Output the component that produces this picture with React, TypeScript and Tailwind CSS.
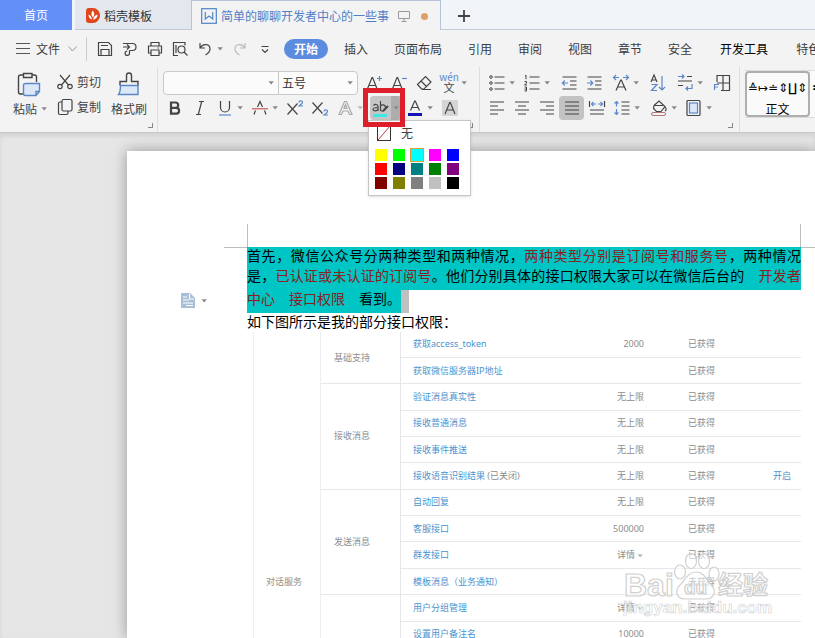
import type { ReactNode } from "react";

const INK = "#444";
const BLUE = "#5b87c9";

function Icon({ children, size = 20 }: { children: ReactNode; size?: number }) {
  return (
    <svg
      width={size}
      height={size}
      viewBox={`0 0 ${size} ${size}`}
      fill="none"
      stroke={INK}
      strokeWidth="1.2"
      className="shrink-0"
      aria-hidden="true"
    >
      {children}
    </svg>
  );
}

function Caret({ light = false }: { light?: boolean }) {
  return (
    <svg width="7" height="4" viewBox="0 0 7 4" className="shrink-0" aria-hidden="true">
      <path d="M0.5 0.3h5.4L3.2 3.5z" fill={light ? "#bbb" : "#888"} />
    </svg>
  );
}

function Tool({ label, children, on = false }: { label: string; children: ReactNode; on?: boolean }) {
  return (
    <button
      type="button"
      aria-label={label}
      className={`flex h-6 w-[25px] shrink-0 items-center justify-center rounded ${on ? "bg-[#c3c3c3]" : ""}`}
    >
      <Icon>{children}</Icon>
    </button>
  );
}

function Split({ label, children, light = false }: { label: string; children: ReactNode; light?: boolean }) {
  return (
    <button type="button" aria-label={label} className="flex h-6 w-[35px] shrink-0 items-center">
      <span className="flex w-[25px] justify-center">
        <Icon>{children}</Icon>
      </span>
      <Caret light={light} />
    </button>
  );
}

function Corner() {
  return <span className="mb-1 h-[5px] w-[5px] shrink-0 self-end border-r border-b border-[#888]" />;
}

function TabBar() {
  return (
    <div className="flex h-[30px] shrink-0 items-stretch overflow-hidden bg-[#f1f4f9] text-xs">
      <button type="button" className="w-[72px] shrink-0 bg-[#628ff8] text-white">
        首页
      </button>
      <button
        type="button"
        className="ml-[3px] flex w-[116px] shrink-0 items-center gap-1 border-b border-[#c0cad8] bg-[#e3e7ee] pt-0.5 pl-[11px] text-[#333]"
      >
        <svg width="14" height="15" viewBox="0 0 14 15" aria-hidden="true">
          <path d="M3 0h4a7 7.5 0 0 1 0 15H3a3 3 0 0 1-3-3V3a3 3 0 0 1 3-3z" fill="#e0461c" />
          <path d="M6.6 2.5c2.4 2.300 2 4.500.4 7C5 7.500 5 5 6.600 2.500zM2.500 6.500c2 .7 3 2.500 3.500 5-2.300-.5-3.500-2.500-3.500-5zM11.500 6.500c0 3-1.500 4.600-4.300 5.200.3-2.700 1.800-4.600 4.300-5.200z" fill="#fff" />
        </svg>
        稻壳模板
      </button>
      <div className="flex w-[250px] shrink-0 items-center border-x border-t border-[#b5c4da] bg-[#f3f3f4] pt-px pl-[9px] text-[#4f7fc6]">
        <svg width="16" height="16" viewBox="0 0 16 16" fill="none" stroke="#4f86c9" strokeWidth="1.2" aria-hidden="true">
          <rect x="0.7" y="0.7" width="14.600" height="14.600" />
          <path d="M4.300 4v7l3.700-3 3.700 3V4" />
        </svg>
        <span className="ml-1 whitespace-nowrap">简单的聊聊开发者中心的一些事</span>
        <svg width="12" height="12" viewBox="0 0 12 12" fill="none" stroke="#999" className="ml-[9px]" aria-hidden="true">
          <path d="M0.500 1.500h11v7h-11zM6 8.500v2.500M3.500 11.500h5" />
        </svg>
        <span className="ml-[11px] h-[7px] w-[7px] rounded-full bg-[#dba069]" />
      </div>
      <div className="flex flex-1 items-center border-b border-[#c0cad8] pt-0.5 pl-4">
        <button type="button" aria-label="新建标签">
          <svg width="14" height="14" viewBox="0 0 14 14" stroke="#444" strokeWidth="1.800" aria-hidden="true">
            <path d="M7 1v12M1 7h12" />
          </svg>
        </button>
      </div>
    </div>
  );
}

function MenuBar() {
  const menus = ["插入", "页面布局", "引用", "审阅", "视图", "章节", "安全", "开发工具", "特色功能"];
  return (
    <div className="flex h-[37px] shrink-0 items-center overflow-hidden pl-4 text-xs whitespace-nowrap text-[#3c3c3c]">
      <button type="button" className="flex w-[61px] shrink-0 items-center">
        <svg width="14" height="11" viewBox="0 0 14 11" stroke="#555" aria-hidden="true">
          <path d="M0 0.500h14M0 5.500h14M0 10.500h14" />
        </svg>
        <span className="ml-1.5">文件</span>
        <svg width="9" height="6" viewBox="0 0 9 6" fill="none" stroke="#999" className="ml-2 shrink-0" aria-hidden="true">
          <path d="M0.500 0.500l4 4.500 4-4.500" />
        </svg>
      </button>
      <span className="ml-[9px] h-6 w-px shrink-0 bg-[#ccc]" />
      <div className="ml-[5px] flex shrink-0">
        <Tool label="保存">
          <path d="M3.500 3.500h10l3 3v10h-13zM6 16.500v-6h8v6M6 6.500h7" />
        </Tool>
        <Tool label="输出">
          <path d="M8 4.500h4.500a3.500 3.500 0 0 1 0 7H9.500M9.500 11.500v2.800a2.200 2.200 0 1 1-2.200-2.300M3 4.500h5M3 8h6M7 5.500L9.500 8 7 10.500" />
        </Tool>
        <Tool label="打印">
          <path d="M6 7V3.500h8V7M6 14H3.500V7h13v7H14M6 11h8v5.500H6zM12.500 9h1.500" />
        </Tool>
        <Tool label="打印预览">
          <path d="M8 16.500H3.500v-13h11.500v3" />
          <circle cx="11.500" cy="10.500" r="3.500" />
          <path d="M14 13l3.500 3.500M6 6v8" />
        </Tool>
        <Split label="撤销">
          <path d="M5 4v5h5M5.500 8.500C8 4.500 15 4.500 15 10c0 3-2 4.500-4.500 6" />
        </Split>
        <Tool label="恢复">
          <path stroke="#bbb" d="M15 4v5h-5M14.500 8.500C12 4.500 5 4.500 5 10c0 3 2 4.500 4.500 6" />
        </Tool>
        <Tool label="自定义">
          <path d="M6.500 7.500h7M7 10.500l3 3 3-3" />
        </Tool>
      </div>
      <nav className="ml-[7px] flex shrink-0 items-center gap-[26px]">
        <button type="button" className="-mr-2.5 h-5 w-11 rounded-full bg-[#5b8ce0] font-bold text-white">
          开始
        </button>
        {menus.map((m) => (
          <button type="button" key={m} className={m === "开发工具" ? "mx-0.5 text-black" : ""}>
            {m}
          </button>
        ))}
      </nav>
    </div>
  );
}

const swatches = [
  "#ffff00", "#00ff00", "#00ffff", "#ff00ff", "#0000ff",
  "#ff0000", "#000080", "#008080", "#008000", "#800080",
  "#800000", "#808000", "#808080", "#c0c0c0", "#000000",
];

function HighlightMenu() {
  return (
    <div className="absolute top-6 left-px z-10 h-[76px] w-[103px] border border-[#c6c6c6] bg-white px-1.5 shadow-sm">
      <button type="button" className="flex h-[27px] items-center gap-2.5 pb-0.5 pl-0.5 text-xs text-[#444]">
        <svg width="14" height="17" viewBox="0 0 14 17" fill="none" stroke="#333" aria-hidden="true">
          <rect x="0.500" y="0.500" width="13" height="15" />
          <path d="M1 15L13 1" stroke="#c43c3c" />
        </svg>
        无
      </button>
      <div className="grid grid-cols-[repeat(5,12px)] gap-x-1.5 gap-y-0.5 pt-px">
        {swatches.map((c) => (
          <button
            type="button"
            key={c}
            aria-label={c}
            className={`h-3 ${c === "#00ffff" ? "outline outline-[#e0a030]" : ""}`}
            style={{ backgroundColor: c }}
          />
        ))}
      </div>
    </div>
  );
}

function ClipboardGroup() {
  return (
    <div className="flex h-[65px] shrink-0 border-r border-[#dedede] pt-1 pl-[13px] text-xs text-[#444]">
      <button type="button" className="flex w-[34px] flex-col">
        <svg width="26" height="26" viewBox="0 0 26 26" fill="none" stroke="#444" strokeWidth="1.400" className="ml-[3px]" aria-hidden="true">
          <path d="M7 4H4.500a2 2 0 0 0-2 2v15a2 2 0 0 0 2 2H8M16 4h2.500a2 2 0 0 1 2 2v5M7.500 2.500h8.500v4H7.500z" />
          <path d="M9.500 12.500h14v8l-3.500 4H9.500a2 2 0 0 1-2-2v-8a2 2 0 0 1 2-2zM23.500 20.500H20v4" fill="#dce8f8" stroke={BLUE} />
        </svg>
        <span className="mt-[3px] flex items-center gap-1 leading-[18px] whitespace-nowrap">
          粘贴 <Caret />
        </span>
      </button>
      <div className="ml-2 flex w-[50px] flex-col">
        <button type="button" className="flex h-[22px] items-center gap-0.5 whitespace-nowrap">
          <Icon>
            <path d="M5 3l8.500 10M15 3L6.500 13" />
            <circle cx="5" cy="14.500" r="2.200" />
            <circle cx="15" cy="14.500" r="2.200" />
          </Icon>
          剪切
        </button>
        <button type="button" className="flex h-7 items-center gap-0.5 whitespace-nowrap">
          <Icon>
            <rect x="7" y="2.500" width="10" height="11.500" rx="1.500" />
            <path d="M7 5H5a1.500 1.500 0 0 0-1.500 1.500v9.500A1.500 1.500 0 0 0 5 17.500h6.500a1.500 1.500 0 0 0 1.500-1.500v-2" />
          </Icon>
          复制
        </button>
      </div>
      <button type="button" className="ml-1.5 flex w-9 flex-col items-center">
        <svg width="24" height="26" viewBox="0 0 24 26" fill="none" stroke="#444" strokeWidth="1.400" aria-hidden="true">
          <path d="M3 14.500v-4h6.500V4.500a2.500 2.500 0 0 1 5 0v6H21v4" />
          <path d="M3.500 14.500h17.500v9H1.500c1.500-2 2-5 2-9z" fill="#dce8f8" stroke={BLUE} />
        </svg>
        <span className="mt-[3px] leading-[18px] whitespace-nowrap">格式刷</span>
      </button>
      <div className="ml-px flex pr-1">
        <Corner />
      </div>
    </div>
  );
}

function FontGroup() {
  return (
    <div className="flex h-[65px] shrink-0 border-r border-[#dedede] pt-[3px] pl-1">
      <div className="flex flex-col">
        <div className="flex h-[25px] items-center">
          <div className="ml-px flex h-6 w-[195px] rounded border border-[#c9c9c9] bg-[#fbfbfb] text-xs text-[#333]">
            <label className="flex w-[115px] items-center border-r border-[#c9c9c9] pr-[3px]">
              <select aria-label="字体" className="min-w-0 flex-1 appearance-none px-1">
                <option></option>
              </select>
              <Caret />
            </label>
            <label className="flex flex-1 items-center pr-[3px]">
              <select aria-label="字号" className="min-w-0 flex-1 appearance-none px-[3px]">
                <option>五号</option>
              </select>
              <Caret />
            </label>
          </div>
          <div className="ml-[3px] flex">
            <Tool label="增大字号">
              <path d="M3 17L8 4.500h.6L13.500 17M4.700 12.500h7" />
              <path d="M15.500 3v5M13 5.500h5" stroke={BLUE} />
            </Tool>
            <Tool label="减小字号">
              <path d="M3 17L8 4.500h.6L13.500 17M4.700 12.500h7" />
              <path d="M13 5.500h5" stroke={BLUE} />
            </Tool>
            <Tool label="清除格式">
              <path d="M3.500 11.500l8-8 5.500 5.500-7 7H7.500zM7 8l5.500 5.500M8 16.500h9" />
            </Tool>
          </div>
          <button type="button" className="ml-px flex h-6 items-center">
            <span className="flex w-6 flex-col items-center text-[#444]">
              <span className="text-[10px] leading-[10px] text-[#5b87c9]">wén</span>
              <span className="text-[11px] leading-[11px]">文</span>
            </span>
            <Caret />
          </button>
        </div>
        <div className="flex h-[25px] items-center">
          <Tool label="加粗">
            <path strokeWidth="2.200" d="M6 4.500h4.500a2.700 2.700 0 0 1 0 5.400H6zM6 9.900h5.200a2.900 2.900 0 0 1 0 5.800H6z" />
          </Tool>
          <Tool label="倾斜">
            <path d="M9 3.500h5M6 16.500h5M11.700 3.500l-3.400 13" />
          </Tool>
          <Split label="下划线">
            <path d="M5.500 3v6.500a4.500 4.500 0 0 0 9 0V3" />
            <path d="M4 17h12" stroke={BLUE} />
          </Split>
          <Split label="删除线">
            <path d="M7.500 9L10 3.500 12.500 9M5.500 12.500L4 16.500M14.500 12.500l1.500 4" />
            <path d="M2 10.800h16" stroke="#c45b5b" />
          </Split>
          <Tool label="上标">
            <path d="M2.500 5.500l10 11M12.500 5.500l-10 11" />
            <path d="M14 4.500c0-2.300 3.500-2.300 3.500 0C17.500 6 15 7 14 8h4" stroke={BLUE} />
          </Tool>
          <Tool label="下标">
            <path d="M2.500 4.500l10 11M12.500 4.500l-10 11" />
            <path d="M14 13.500c0-2.300 3.500-2.300 3.500 0 0 1.500-2.500 2.500-3.500 3.500h4" stroke={BLUE} />
          </Tool>
          <Split label="文字效果" light>
            <path stroke="#aaa" d="M4 16.500L9.500 3.500h2l5.500 13h-2.500l-1.500-3.500H8l-1.500 3.500zM9 10.500h3l-1.500-4z" />
          </Split>
          <div className="relative">
            <button type="button" aria-label="突出显示" className="flex h-6 w-[35px] items-center pl-[3px]">
              <span className="flex h-6 w-[21px] items-center justify-center rounded-l bg-[#c6c6c6]">
                <Icon>
                  <path d="M2.500 7.500c1-1.500 4.500-1.500 4.500 1v4.500M7 9.500c-3 0-5 .5-5 2s3.500 2 5 0M9.500 3v10M9.500 8c1.500-2 5-1.500 5 1.500s-3.500 5-5 2.500" />
                  <path d="M12 13l5-5" strokeWidth="2" />
                  <path d="M2 17.500h14" stroke="#3fe8e4" strokeWidth="3" />
                </Icon>
              </span>
              <span className="flex h-6 w-[11px] items-center justify-center rounded-r bg-[#adadad]">
                <Caret />
              </span>
            </button>
            <HighlightMenu />
            <div className="pointer-events-none absolute -top-2 -left-1 z-20 h-[39px] w-[42px] border-[5px] border-[#dc1f2b]" />
          </div>
          <Split label="字体颜色">
            <path d="M5.500 12.500L9.700 3h.6l4.200 9.500M7 9.500h6" />
            <path d="M3 16.500h14" stroke="#1414b4" strokeWidth="3" />
          </Split>
          <Tool label="字符底纹">
            <rect x="2" y="2" width="16" height="16" fill="#d5d5d5" stroke="none" />
            <path d="M5 16L9.700 4.500h.6L15 16M6.700 12h6.600" />
          </Tool>
        </div>
      </div>
      <div className="flex pr-1.5">
        <Corner />
      </div>
    </div>
  );
}

function ParagraphGroup() {
  return (
    <div className="flex h-[65px] shrink-0 border-r border-[#dedede] pt-[3px] pl-1">
      <div className="flex flex-col">
        <div className="flex h-[25px] items-center gap-0.5">
          <div className="flex">
            <Split label="项目符号">
              <path d="M7.500 4h10M7.500 10h10M7.500 16h10" />
              <g strokeWidth="1">
                <circle cx="4" cy="4" r="1.300" />
                <circle cx="4" cy="10" r="1.300" />
                <circle cx="4" cy="16" r="1.300" />
              </g>
            </Split>
            <Split label="编号">
              <path d="M7.500 4h10M7.500 10h10M7.500 16h10" />
              <path strokeWidth="1" d="M3 3l1-.8v4M2.500 8.500h2v1.500l-2 2h2.500M2.500 14h2v4h-2M2.500 16h2" />
            </Split>
          </div>
          <div className="flex">
            <Tool label="减少缩进">
              <path d="M3.500 4h14M11 8h6.500M11 12h6.500M3.500 16h14" />
              <path d="M9 10H3.500M5.800 7.500L3.300 10l2.500 2.500" stroke={BLUE} />
            </Tool>
            <Tool label="增加缩进">
              <path d="M3.500 4h14M11 8h6.500M11 12h6.500M3.500 16h14" />
              <path d="M3 10h5.500M6.300 7.500L8.800 10l-2.500 2.500" stroke={BLUE} />
            </Tool>
          </div>
          <Split label="中文版式">
            <path d="M5 17.500L9.700 7h.6L15 17.500M6.700 14h6.600" />
            <path d="M3 4.500h5M5 2L2.500 4.500 5 7M12 4.500h5M15 2l2.500 2.500L15 7" stroke={BLUE} />
          </Split>
          <Tool label="排序">
            <path d="M3 9l3-7 3 7M4 7h4" />
            <path d="M3.500 11.500H9l-5.500 6H9M14 3v14M11 14l3 3 3-3" stroke={BLUE} />
          </Tool>
          <Split label="换行">
            <path d="M3 8h14M3 12.500h5M12 3.500h5" />
            <path d="M3 3.500h6M7 1.500l2 2-2 2M17 11v4.500h-6M13 13.500l-2 2 2 2" stroke={BLUE} />
          </Split>
          <Tool label="制表位">
            <path d="M5 9V2.500h12.500v15H9M11 2.500v15M5 10h12.500" />
            <path d="M2.500 17v-5.500H7M2.500 14H6" stroke={BLUE} />
          </Tool>
        </div>
        <div className="flex h-[25px] items-center">
          <Tool label="左对齐">
            <path d="M3 4h14M3 8h8M3 12h14M3 16h8" />
          </Tool>
          <Tool label="居中">
            <path d="M3 4h14M6 8h8M3 12h14M6 16h8" />
          </Tool>
          <Tool label="右对齐">
            <path d="M3 4h14M9 8h8M3 12h14M9 16h8" />
          </Tool>
          <Tool label="两端对齐" on>
            <path d="M3 4h14M3 8h14M3 12h14M3 16h14" />
          </Tool>
          <Tool label="分散对齐">
            <path d="M3 12h14M3 16h14M2.500 3v6M17.500 3v6" />
            <path d="M5 6h4M6.500 4L4.500 6l2 2M11 6h4M13.500 4l2 2-2 2" stroke={BLUE} />
          </Tool>
          <Split label="行距">
            <path d="M9.500 4h8M9.500 8h8M9.500 12h8M9.500 16h8" />
            <path d="M4.500 3.500v5M2.500 5.500l2-2 2 2M4.500 11v5.500M2.500 14.500l2 2 2-2" stroke={BLUE} />
          </Split>
          <div className="ml-0.5 flex">
            <Split label="底纹">
              <path d="M5 7.500L10 3l6 5.500-4 5H7.500l-3-3zM5 7.500h9" />
              <path d="M16 9c1.500 2 1.500 3 0 4" />
              <rect x="2.500" y="14.500" width="14" height="3" rx="1.500" stroke="#b07878" strokeWidth="1" />
            </Split>
            <Split label="边框">
              <rect x="3" y="2.500" width="13" height="15" rx="1" />
              <rect x="5.500" y="5" width="8" height="10" fill="#dce8f8" stroke={BLUE} />
            </Split>
          </div>
        </div>
      </div>
      <div className="-ml-1.5 flex pr-1.5">
        <Corner />
      </div>
    </div>
  );
}

function Ribbon() {
  return (
    <div className="relative z-10 flex h-[66px] shrink-0 items-start border-b border-[#c9c9c9] bg-[#f3f3f4]">
      <ClipboardGroup />
      <FontGroup />
      <ParagraphGroup />
      <div className="mt-[3px] ml-[5px] flex h-12 min-w-0 flex-1 overflow-hidden border-y border-[#ddd] bg-[#fafafa]">
        <button
          type="button"
          className="flex w-[65px] shrink-0 flex-col items-center rounded-sm border-2 border-[#aeaeae] text-xs text-black"
        >
          <span className="h-[27px] font-['DejaVu_Sans','Noto_Sans_CJK_SC',sans-serif] leading-[30px] whitespace-nowrap">
            ≙↦≐⇕∐⇕
          </span>
          <span className="leading-[18px]">正文</span>
        </button>
        <span className="ml-0.5 pt-1.5 font-['DejaVu_Sans',sans-serif] text-sm font-bold">≙</span>
      </div>
    </div>
  );
}

type Row = { group?: [string, number]; name: string; note?: string; limit?: string; more?: boolean; status?: string; action?: string };

const rows: Row[] = [
  { group: ["基础支持", 2], name: "获取access_token", limit: "2000" },
  { name: "获取微信服务器IP地址" },
  { group: ["接收消息", 4], name: "验证消息真实性", limit: "无上限" },
  { name: "接收普通消息", limit: "无上限" },
  { name: "接收事件推送", limit: "无上限" },
  { name: "接收语音识别结果", note: "(已关闭)", limit: "无上限", action: "开启" },
  { group: ["发送消息", 4], name: "自动回复", limit: "无上限" },
  { name: "客服接口", limit: "500000" },
  { name: "群发接口", limit: "详情", more: true },
  { name: "模板消息（业务通知）", status: "未获得" },
  { group: ["", 2], name: "用户分组管理", limit: "详情", more: true },
  { name: "设置用户备注名", limit: "10000" },
];

function PermissionTable() {
  return (
    <table className="ml-1.5 h-[316px] w-[calc(100%-6px)] table-fixed border-collapse font-['Noto_Sans','Noto_Sans_CJK_SC',sans-serif] text-[9px] leading-3 text-[#8d8d8d]">
      <colgroup>
        <col className="w-[67px]" />
        <col className="w-20" />
        <col />
        <col className="w-[60px]" />
        <col className="w-[116px]" />
        <col className="w-[41px]" />
      </colgroup>
      <tbody>
        {rows.map((r, i) => (
          <tr key={r.name}>
            {i === 0 && (
              <td rowSpan={12} className="border-x border-[#efefef] pb-[60px] pl-3 align-bottom">
                对话服务
              </td>
            )}
            {r.group && (
              <td rowSpan={r.group[1]} className="border-r border-b border-[#e7e7eb] pl-[13px]">
                {r.group[0]}
              </td>
            )}
            <td className="border-b border-[#e7e7eb] pl-3 whitespace-nowrap">
              <a href="#" className="text-[#4a94d0]">
                {r.name}
              </a>
              {r.note && <span> {r.note}</span>}
            </td>
            <td className="border-b border-[#e7e7eb] text-right whitespace-nowrap">
              {r.limit}
              {r.more && (
                <span className="ml-0.5 inline-block align-middle">
                  <Caret light />
                </span>
              )}
            </td>
            <td className="border-b border-[#e7e7eb] pl-11">
              {r.status ?? "已获得"}
              {r.status && (
                <span className="ml-1 inline-block h-2 w-2 rounded-full border border-[#999] text-center text-[6px] leading-[6px]">
                  ?
                </span>
              )}
            </td>
            <td className="border-b border-[#e7e7eb] pr-2.5 text-right whitespace-nowrap">
              {r.action && (
                <a href="#" className="text-[#4a94d0]">
                  {r.action}
                </a>
              )}
            </td>
          </tr>
        ))}
      </tbody>
    </table>
  );
}

function Watermark() {
  return (
    <svg
      width="150"
      height="76"
      viewBox="0 0 150 76"
      className="pointer-events-none absolute right-[42px] bottom-[14px]"
      fill="#fff"
      fillOpacity="0.55"
      stroke="#d0d0d0"
      strokeWidth="1.200"
      fontFamily="'Liberation Sans', 'Noto Sans CJK SC', sans-serif"
      fontWeight="bold"
    >
      <text x="1" y="48" fontSize="32">Bai</text>
      <ellipse cx="57" cy="24" rx="5.500" ry="7" />
      <ellipse cx="68" cy="13" rx="5.500" ry="7.500" />
      <ellipse cx="81" cy="13" rx="5.500" ry="7.500" />
      <ellipse cx="91" cy="26" rx="5" ry="7" />
      <path d="M73 24c9 0 11 9 16 14 5 6 1 13-6 13H62c-8 0-11-8-5-14 5-5 8-13 16-13z" />
      <text x="61" y="46" fontSize="19">du</text>
      <text x="95" y="46" fontSize="25">经验</text>
      <text x="0" y="65" fontSize="17" strokeWidth="0.600">jingyan.baidu.com</text>
    </svg>
  );
}

function DocumentPage() {
  return (
    <main className="relative min-h-0 flex-1 overflow-hidden bg-[#e6e6e6] pt-[18px] pl-[127px] shadow-[inset_0_3px_4px_#d2d2d2]">
      <div className="h-full bg-white pt-[73px] shadow-[0_0_14px_rgba(0,0,0,0.35)]">
        <div className="flex h-6">
          <div className="ml-[97px] w-6 border-r border-b border-[#bdbdbd]" />
          <div className="flex-1" />
          <div className="w-[15px] border-b border-l border-[#bdbdbd]" />
        </div>
        <div className="-mt-px flex">
          <div className="flex w-[120px] shrink-0 items-start pt-[46px] pl-[54px]">
            <button type="button" aria-label="段落布局" className="flex items-center gap-1.5">
              <svg width="14" height="15" viewBox="0 0 14 15" aria-hidden="true">
                <path d="M0 0h9l5 5v10H0z" fill="#a9bfd6" />
                <path d="M2 4h4M2 7h6M2 10h10M5 12.500h7M8.500 1v5H13" stroke="#fff" strokeWidth="1.200" fill="none" />
              </svg>
              <Caret />
            </button>
          </div>
          <article className="mr-3.5 min-w-0 flex-1">
            <div className="font-['Noto_Sans_CJK_SC',sans-serif] text-sm leading-4 whitespace-nowrap text-black">
              <p className="bg-[#00c5c5] pb-1 [text-align-last:justify]">
                首先，微信公众号分两种类型和两种情况，<span className="text-[#8a2020]">两种类型分别是订阅号和服务号</span>，两种情况
              </p>
              <p className="bg-[#00c5c5] pb-[7px] [text-align-last:justify]">
                是，<span className="text-[#8a2020]">已认证或未认证的订阅号</span>
                {"。他们分别具体的接口权限大家可以在微信后台的\u3000"}
                <span className="text-[#8a2020]">开发者</span>
              </p>
              <p className="flex">
                <span className="bg-[#00c5c5] pb-[7px]">
                  <span className="text-[#8a2020]">中心　接口权限</span>
                  {"\u3000看到。"}
                </span>
                <span className="w-2 bg-[#c0c0c0]" />
              </p>
              <p className="pb-[3px]">如下图所示是我的部分接口权限：</p>
            </div>
            <PermissionTable />
          </article>
        </div>
      </div>
      <Watermark />
    </main>
  );
}

export default function App() {
  return (
    <div className="flex h-screen flex-col overflow-hidden bg-[#f3f3f4] font-['Noto_Sans_CJK_SC',sans-serif]">
      <TabBar />
      <MenuBar />
      <Ribbon />
      <DocumentPage />
    </div>
  );
}
